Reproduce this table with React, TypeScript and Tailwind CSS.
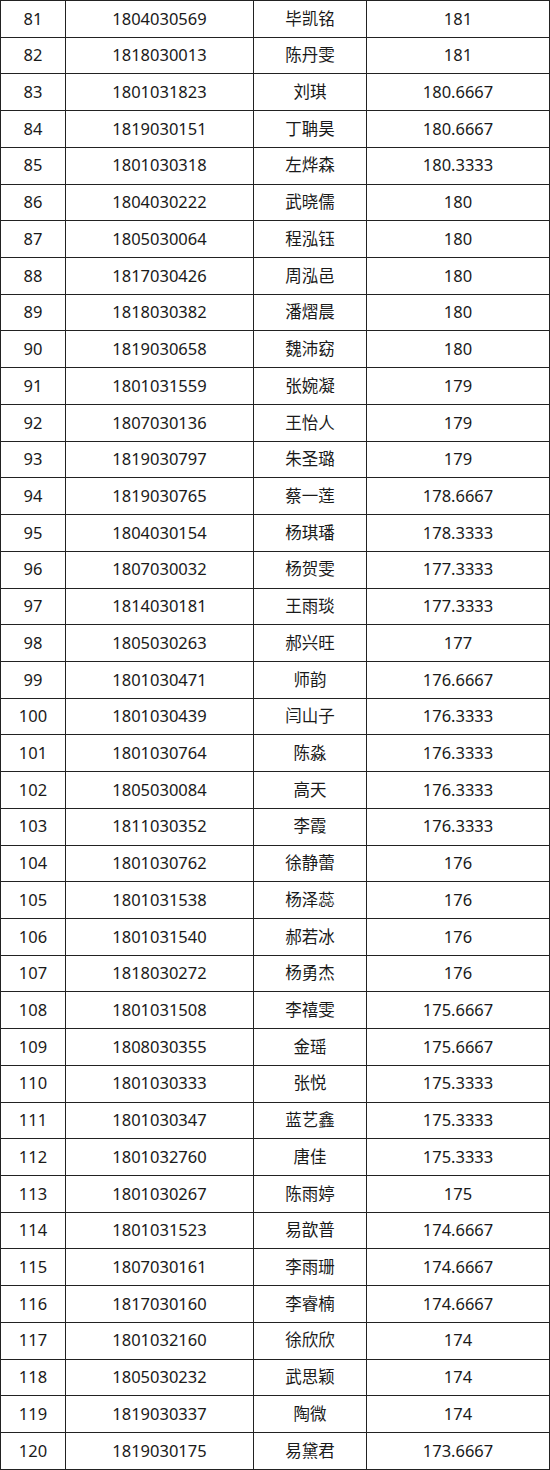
const rows: [string, string, string, string][] = [
    ["81", "1804030569", "毕凯铭", "181"],
    ["82", "1818030013", "陈丹雯", "181"],
    ["83", "1801031823", "刘琪", "180.6667"],
    ["84", "1819030151", "丁聃昊", "180.6667"],
    ["85", "1801030318", "左烨森", "180.3333"],
    ["86", "1804030222", "武晓儒", "180"],
    ["87", "1805030064", "程泓钰", "180"],
    ["88", "1817030426", "周泓邑", "180"],
    ["89", "1818030382", "潘熠晨", "180"],
    ["90", "1819030658", "魏沛窈", "180"],
    ["91", "1801031559", "张婉凝", "179"],
    ["92", "1807030136", "王怡人", "179"],
    ["93", "1819030797", "朱圣璐", "179"],
    ["94", "1819030765", "蔡一莲", "178.6667"],
    ["95", "1804030154", "杨琪璠", "178.3333"],
    ["96", "1807030032", "杨贺雯", "177.3333"],
    ["97", "1814030181", "王雨琰", "177.3333"],
    ["98", "1805030263", "郝兴旺", "177"],
    ["99", "1801030471", "师韵", "176.6667"],
    ["100", "1801030439", "闫山子", "176.3333"],
    ["101", "1801030764", "陈淼", "176.3333"],
    ["102", "1805030084", "高天", "176.3333"],
    ["103", "1811030352", "李霞", "176.3333"],
    ["104", "1801030762", "徐静蕾", "176"],
    ["105", "1801031538", "杨泽蕊", "176"],
    ["106", "1801031540", "郝若冰", "176"],
    ["107", "1818030272", "杨勇杰", "176"],
    ["108", "1801031508", "李禧雯", "175.6667"],
    ["109", "1808030355", "金瑶", "175.6667"],
    ["110", "1801030333", "张悦", "175.3333"],
    ["111", "1801030347", "蓝艺鑫", "175.3333"],
    ["112", "1801032760", "唐佳", "175.3333"],
    ["113", "1801030267", "陈雨婷", "175"],
    ["114", "1801031523", "易歆普", "174.6667"],
    ["115", "1807030161", "李雨珊", "174.6667"],
    ["116", "1817030160", "李睿楠", "174.6667"],
    ["117", "1801032160", "徐欣欣", "174"],
    ["118", "1805030232", "武思颖", "174"],
    ["119", "1819030337", "陶微", "174"],
    ["120", "1819030175", "易黛君", "173.6667"],
];

const App = () => {
    return (
        <div className="w-[550px] bg-white">
            <table className="w-[550px] table-fixed border-collapse text-[16.5px] text-[#1a1a1a] font-['Noto_Sans','Noto_Sans_CJK_SC',sans-serif]">
                <colgroup>
                    <col className="w-[65px]" />
                    <col className="w-[188px]" />
                    <col className="w-[113px]" />
                    <col />
                </colgroup>
                <tbody>
                    {rows.map((r) => (
                        <tr key={r[0]} className="h-[36.72px]">
                            {r.map((cell, i) => (
                                <td
                                    key={i}
                                    className="border border-[#222] p-0 text-center align-middle leading-none"
                                >
                                    {cell}
                                </td>
                            ))}
                        </tr>
                    ))}
                </tbody>
            </table>
        </div>
    );
};

export default App;
